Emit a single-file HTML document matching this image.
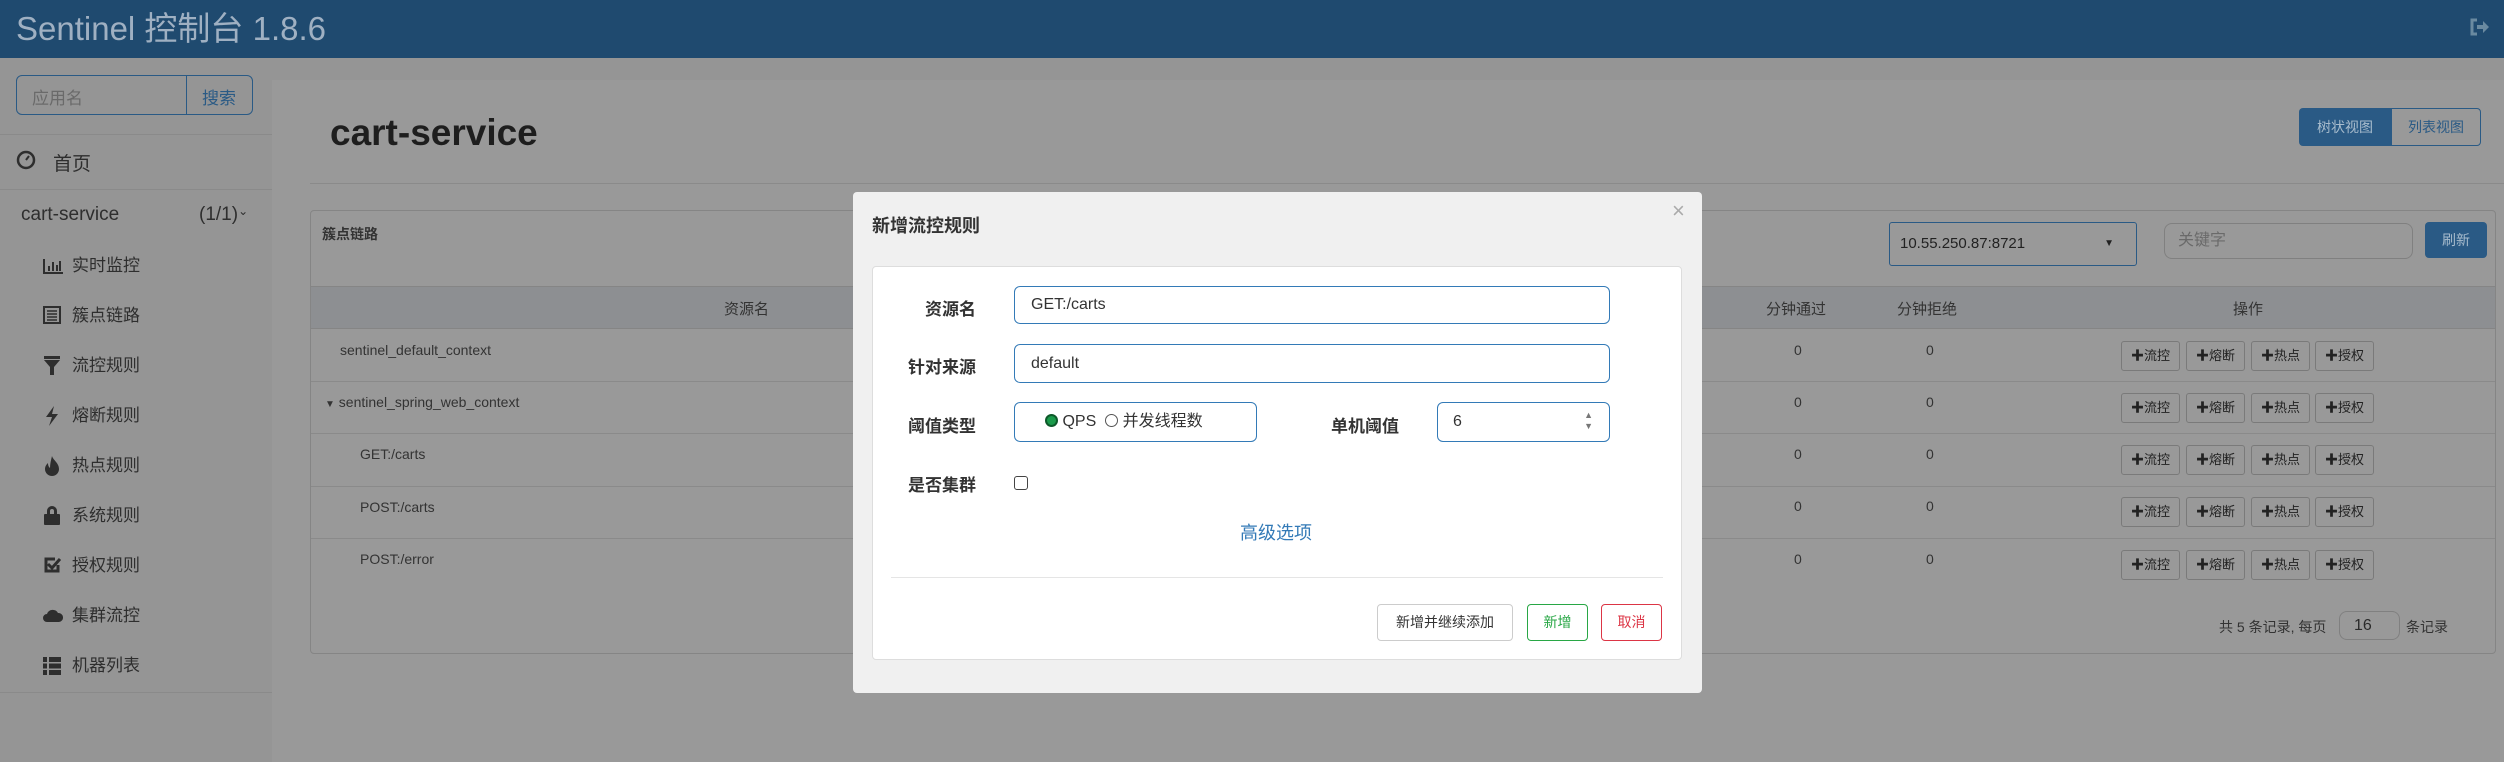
<!DOCTYPE html>
<html><head><meta charset="utf-8"><style>
*{box-sizing:border-box;margin:0;padding:0}
body{width:2504px;height:762px;overflow:hidden;position:relative;background:#959595;font-family:"Liberation Sans","Noto Sans CJK SC",sans-serif;color:#2b2b2b}
.a{position:absolute}
.hdr{left:0;top:0;width:2504px;height:58px;background:#1f4a6f;color:#9fb0c2;font-size:33px;line-height:58px;padding-left:16px}
.side{left:0;top:58px;width:272px;height:704px;background:#959595}
.line{height:1px;background:#8a8a8a}
.mi{font-size:17px;color:#2e2e2e;line-height:20px;left:72px}
.ic{left:43px}
.content{left:272px;top:80px;width:2232px;height:682px;background:#999}
.cell{font-size:14px;color:#333}
.btn{border:1px solid #7a7a7a;border-radius:3px;background:#999;font-size:13px;color:#222;text-align:center;line-height:28px;height:30px}
.modal{left:853px;top:192px;width:849px;height:501px;background:#f0f0f0;border-radius:4px}
.lbl{font-size:17px;font-weight:bold;color:#333;text-align:right;width:110px}
.inp{border:1px solid #337ab7;border-radius:6px;background:#fff;font-size:16px;color:#333;padding-left:16px}
</style></head><body>
<div class="a hdr">Sentinel 控制台 1.8.6</div>
<svg class="a" style="left:2469px;top:18px" width="20" height="18" viewBox="0 0 20 18"><path d="M8 2H3v14h5" stroke="#6a8aa0" stroke-width="3" fill="none"/><path d="M8 7h6V3l6 6-6 6v-4H8z" fill="#6a8aa0"/></svg>
<div class="a side"></div>
<div class="a" style="left:16px;top:75px;width:237px;height:40px;border:1px solid #2a5a85;border-radius:6px"></div>
<div class="a" style="left:186px;top:75px;width:1px;height:40px;background:#2a5a85"></div>
<div class="a" style="left:32px;top:84px;font-size:17px;color:#6a6a6a">应用名</div>
<div class="a" style="left:202px;top:84px;font-size:17px;color:#2a5a85">搜索</div>
<div class="a line" style="left:0;top:134px;width:272px"></div>
<svg class="a" style="left:16px;top:150px" width="20" height="20"><circle cx="10" cy="10" r="8" stroke="#2e2e2e" stroke-width="2.5" fill="none"/><path d="M10 10l3-4" stroke="#2e2e2e" stroke-width="2"/></svg>
<div class="a" style="left:53px;top:149px;font-size:19px;color:#2e2e2e">首页</div>
<div class="a line" style="left:0;top:189px;width:272px"></div>
<div class="a" style="left:21px;top:204px;font-size:19px;color:#2e2e2e">cart-service</div>
<div class="a" style="left:199px;top:204px;font-size:19px;color:#2e2e2e">(1/1)<span style="font-size:12px;vertical-align:top">&#8964;</span></div>

<svg class="a ic" style="top:257px" width="20" height="18" fill="#2e2e2e"><path d="M0 2h2v13h18v2H0z"/><rect x="5" y="9" width="2" height="5"/><rect x="9" y="5" width="2" height="9"/><rect x="13" y="8" width="2" height="6"/><rect x="16" y="4" width="2" height="10"/></svg>
<div class="a mi" style="top:256px">实时监控</div>
<svg class="a ic" style="top:306px" width="18" height="18"><rect x="1" y="1" width="16" height="16" fill="none" stroke="#2e2e2e" stroke-width="2"/><path d="M4 5h10M4 8h10M4 11h10M4 14h10" stroke="#2e2e2e" stroke-width="1.5"/></svg>
<div class="a mi" style="top:306px">簇点链路</div>
<svg class="a ic" style="top:356px" width="18" height="20" fill="#2e2e2e"><rect x="1" y="0" width="16" height="3"/><path d="M1 4h16l-6 7v8h-4v-8z"/></svg>
<div class="a mi" style="top:356px">流控规则</div>
<svg class="a ic" style="top:406px" width="18" height="20" fill="#2e2e2e"><path d="M11 0L3 11h6l-3 9 9-12H9z"/></svg>
<div class="a mi" style="top:406px">熔断规则</div>
<svg class="a ic" style="top:456px" width="18" height="20" fill="#2e2e2e"><path d="M9 0c1 4 7 7 7 13a7 7 0 0 1-14 0c0-3 2-5 3-6 0 3 1 4 2 5 0-4 1-8 2-12z"/></svg>
<div class="a mi" style="top:456px">热点规则</div>
<svg class="a ic" style="top:505px" width="18" height="20" fill="#2e2e2e"><path d="M4 9V6a5 5 0 0 1 10 0v3h-3V6a2 2 0 0 0-4 0v3z"/><rect x="1" y="9" width="16" height="11" rx="1"/></svg>
<div class="a mi" style="top:506px">系统规则</div>
<svg class="a ic" style="top:556px" width="18" height="18"><path d="M15 9v6H3V3h9" fill="none" stroke="#2e2e2e" stroke-width="3"/><path d="M5 8l4 4 8-9" fill="none" stroke="#2e2e2e" stroke-width="3"/></svg>
<div class="a mi" style="top:556px">授权规则</div>
<svg class="a ic" style="top:608px" width="20" height="14" fill="#2e2e2e"><path d="M4 14a4 4 0 0 1 0-8 6 6 0 0 1 11-1 4.5 4.5 0 0 1 1 9z"/></svg>
<div class="a mi" style="top:606px">集群流控</div>
<svg class="a ic" style="top:657px" width="18" height="18" fill="#2e2e2e"><rect x="0" y="0" width="4" height="5"/><rect x="6" y="0" width="12" height="5"/><rect x="0" y="6.5" width="4" height="5"/><rect x="6" y="6.5" width="12" height="5"/><rect x="0" y="13" width="4" height="5"/><rect x="6" y="13" width="12" height="5"/></svg>
<div class="a mi" style="top:656px">机器列表</div>
<div class="a line" style="left:0;top:692px;width:272px"></div>
<div class="a content"></div>
<div class="a" style="left:330px;top:112px;font-size:37px;font-weight:bold;color:#1e1e1e">cart-service</div>
<div class="a line" style="left:310px;top:183px;width:2194px"></div>
<div class="a" style="left:2299px;top:108px;width:92px;height:38px;background:#2a5a85;border-radius:4px 0 0 4px;color:#a8bccd;font-size:14px;line-height:38px;text-align:center">树状视图</div>
<div class="a" style="left:2391px;top:108px;width:90px;height:38px;border:1px solid #2a5a85;border-radius:0 4px 4px 0;color:#2a5a85;font-size:14px;line-height:36px;text-align:center">列表视图</div>
<div class="a" style="left:310px;top:210px;width:2186px;height:444px;border:1px solid #858585;border-radius:4px"></div>
<div class="a" style="left:322px;top:224px;font-size:14px;font-weight:bold;color:#333">簇点链路</div>
<div class="a" style="left:1889px;top:222px;width:248px;height:44px;border:1px solid #2a5a85;border-radius:3px;font-size:15px;line-height:42px;padding-left:10px;color:#222">10.55.250.87:8721<span style="position:absolute;right:22px;font-size:10px">▼</span></div>
<div class="a" style="left:2164px;top:223px;width:249px;height:36px;border:1px solid #808080;border-radius:8px;font-size:16px;line-height:34px;padding-left:13px;color:#6a6a6a">关键字</div>
<div class="a" style="left:2425px;top:222px;width:62px;height:36px;background:#2a5a85;border-radius:4px;color:#a8bccd;font-size:14px;line-height:36px;text-align:center">刷新</div>
<div class="a" style="left:311px;top:286px;width:2184px;height:43px;background:#8d8f92;border-top:1px solid #858585;border-bottom:1px solid #858585"></div>
<div class="a cell" style="left:724px;top:298px;font-size:15px">资源名</div>
<div class="a cell" style="left:1766px;top:298px;font-size:15px">分钟通过</div>
<div class="a cell" style="left:1897px;top:298px;font-size:15px">分钟拒绝</div>
<div class="a cell" style="left:2233px;top:298px;font-size:15px">操作</div>
<div class="a line" style="left:311px;top:381px;width:2184px"></div>
<div class="a line" style="left:311px;top:433px;width:2184px"></div>
<div class="a line" style="left:311px;top:486px;width:2184px"></div>
<div class="a line" style="left:311px;top:538px;width:2184px"></div>
<div class="a cell" style="left:340px;top:342px">sentinel_default_context</div>
<div class="a cell" style="left:325px;top:394px"><span style="font-size:10px">▼</span> sentinel_spring_web_context</div>
<div class="a cell" style="left:360px;top:446px">GET:/carts</div>
<div class="a cell" style="left:360px;top:499px">POST:/carts</div>
<div class="a cell" style="left:360px;top:551px">POST:/error</div>
<div id="rows"></div>
<div class="a cell" style="left:2219px;top:617px;font-size:14px">共 5 条记录, 每页</div>
<div class="a" style="left:2339px;top:611px;width:61px;height:29px;border:1px solid #808080;border-radius:8px;font-size:16px;line-height:27px;padding-left:14px">16</div>
<div class="a cell" style="left:2406px;top:617px">条记录</div>
<div class="a modal"></div>
<div class="a" style="left:872px;top:212px;font-size:18px;font-weight:bold;color:#333">新增流控规则</div>
<div class="a" style="left:1672px;top:198px;font-size:22px;color:#aaa">×</div>
<div class="a" style="left:872px;top:266px;width:810px;height:394px;background:#fff;border:1px solid #ddd;border-radius:4px"></div>
<div class="a lbl" style="left:866px;top:295px">资源名</div>
<div class="a lbl" style="left:866px;top:353px">针对来源</div>
<div class="a lbl" style="left:866px;top:412px">阈值类型</div>
<div class="a lbl" style="left:866px;top:471px">是否集群</div>
<div class="a inp" style="left:1014px;top:286px;width:596px;height:38px;line-height:36px">GET:/carts</div>
<div class="a inp" style="left:1014px;top:344px;width:596px;height:39px;line-height:37px">default</div>
<div class="a inp" style="left:1014px;top:402px;width:243px;height:40px;line-height:38px;padding-left:30px;font-size:16px"><span style="display:inline-block;width:13px;height:13px;border-radius:50%;background:#1a9a4a;border:2px solid #0d5a2a;vertical-align:-1px"></span> QPS &nbsp;<span style="display:inline-block;width:13px;height:13px;border-radius:50%;border:1px solid #555;vertical-align:-1px"></span> 并发线程数</div>
<div class="a lbl" style="left:1289px;top:412px">单机阈值</div>
<div class="a inp" style="left:1437px;top:402px;width:173px;height:40px;line-height:38px;padding-left:15px">6<span style="position:absolute;right:16px;top:7px;font-size:9px;line-height:11px;color:#777">▲<br>▼</span></div>
<div class="a" style="left:1014px;top:476px;width:14px;height:14px;border:1px solid #444;border-radius:3px"></div>
<div class="a" style="left:1240px;top:519px;font-size:18px;color:#337ab7">高级选项</div>
<div class="a" style="left:891px;top:577px;width:772px;height:1px;background:#e5e5e5"></div>
<div class="a" style="left:1377px;top:604px;width:136px;height:37px;border:1px solid #ccc;border-radius:4px;font-size:14px;line-height:35px;text-align:center;color:#333">新增并继续添加</div>
<div class="a" style="left:1527px;top:604px;width:61px;height:37px;border:1px solid #28a745;border-radius:4px;font-size:14px;line-height:35px;text-align:center;color:#28a745">新增</div>
<div class="a" style="left:1601px;top:604px;width:61px;height:37px;border:1px solid #dc3545;border-radius:4px;font-size:14px;line-height:35px;text-align:center;color:#dc3545">取消</div>
<script>
var h='',ys=[341,393,445,497,550];
ys.forEach(function(y){
h+='<div class="a cell" style="left:1794px;top:'+(y+1)+'px">0</div><div class="a cell" style="left:1926px;top:'+(y+1)+'px">0</div>';
var xs=[2121,2186,2251,2315],t=['流控','熔断','热点','授权'];
xs.forEach(function(x,i){h+='<div class="a btn" style="left:'+x+'px;top:'+y+'px;width:59px"><b>✚</b>'+t[i]+'</div>';});
});
document.getElementById('rows').innerHTML=h;
</script>
</body></html>
